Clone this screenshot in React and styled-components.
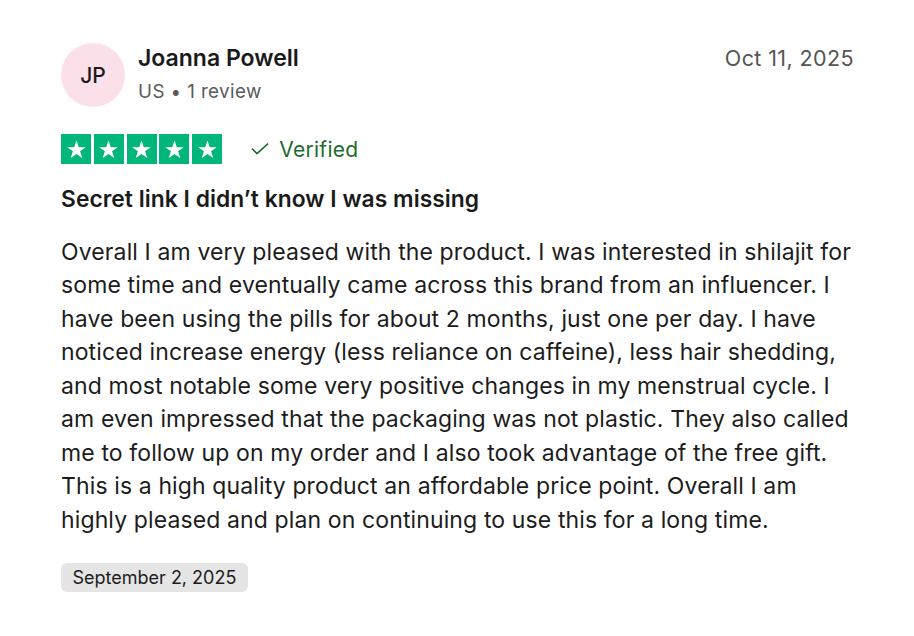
import React from "react";
import styled, { createGlobalStyle } from "styled-components";

const GlobalStyle = createGlobalStyle`
  html, body { margin: 0; padding: 0; background: #ffffff; }
  body { font-family: Inter, "Liberation Sans", sans-serif; color: #1a1a1a; }
  * { box-sizing: border-box; }
`;

const Card = styled.article`
  width: 914px;
  min-height: 636px;
  padding: 43px 60px 0 61px;
  display: flex;
  flex-direction: column;
`;

const Header = styled.header`
  display: flex;
  align-items: flex-start;
`;

const Avatar = styled.div`
  width: 64px;
  height: 64px;
  border-radius: 50%;
  background: #fce0e9;
  display: flex;
  align-items: center;
  justify-content: center;
  font-size: 21px;
  font-weight: 500;
  color: #1a1a1a;
  flex-shrink: 0;
`;

const Who = styled.div`
  margin-left: 13px;
  display: flex;
  flex-direction: column;
  flex: 1;
`;

const Name = styled.div`
  font-size: 23px;
  font-weight: 600;
  line-height: 30px;
  color: #1a1a1a;
`;

const Meta = styled.div`
  margin-top: 6px;
  font-size: 18.8px;
  line-height: 26px;
  color: #5b5b5b;
  letter-spacing: 0.4px;
`;

const DateTop = styled.time`
  font-size: 21.5px;
  line-height: 30px;
  letter-spacing: 0.4px;
  color: #555555;
`;

const RatingRow = styled.div`
  margin-top: 27px;
  display: flex;
  align-items: center;
`;

const Stars = styled.div`
  display: flex;
  gap: 2.8px;
`;

const StarBox = styled.span`
  width: 30px;
  height: 30px;
  background: #00b67a;
  display: flex;
  align-items: center;
  justify-content: center;
`;

const Verified = styled.div`
  margin-left: 29px;
  display: flex;
  align-items: center;
  gap: 10px;
  font-size: 21px;
  letter-spacing: 0.3px;
  color: #1c6b30;
`;

const Title = styled.h2`
  margin: 19.5px 0 0;
  font-size: 22.8px;
  font-weight: 600;
  line-height: 30px;
  letter-spacing: 0.05px;
  color: #1a1a1a;
`;

const Body = styled.p`
  margin: 22.4px 0 0;
  font-size: 23px;
  line-height: 33.5px;
  letter-spacing: 0.12px;
  color: #1c1c1c;
`;

const Pill = styled.div`
  align-self: flex-start;
  margin-top: 25.6px;
  height: 29px;
  padding: 0 11.5px;
  border-radius: 6px;
  background: #e5e5e5;
  font-size: 18px;
  line-height: 29px;
  color: #1c1c1c;
`;

const Star = () => (
  <svg width="21" height="21" viewBox="0 0 24 24" aria-hidden="true">
    <path
      fill="#ffffff"
      d="M12 1.8l2.6 7.6h8l-6.5 4.7 2.5 7.7L12 17l-6.6 4.8 2.5-7.7L1.4 9.4h8z"
    />
  </svg>
);

const Check = () => (
  <svg width="18" height="12" viewBox="0 0 18 12" aria-hidden="true">
    <path d="M1 5.6l5 5 11-10" fill="none" stroke="#1c6b30" strokeWidth="1.5" />
  </svg>
);

const text =
  "Overall I am very pleased with the product. I was interested in shilajit for some time and eventually came across this brand from an influencer. I have been using the pills for about 2 months, just one per day. I have noticed increase energy (less reliance on caffeine), less hair shedding, and most notable some very positive changes in my menstrual cycle. I am even impressed that the packaging was not plastic. They also called me to follow up on my order and I also took advantage of the free gift. This is a high quality product an affordable price point. Overall I am highly pleased and plan on continuing to use this for a long time.";

export default function App() {
  return (
    <>
      <GlobalStyle />
      <Card>
        <Header>
          <Avatar>JP</Avatar>
          <Who>
            <Name>Joanna Powell</Name>
            <Meta>US • 1 review</Meta>
          </Who>
          <DateTop>Oct 11, 2025</DateTop>
        </Header>
        <RatingRow>
          <Stars>
            {[0, 1, 2, 3, 4].map((i) => (
              <StarBox key={i}>
                <Star />
              </StarBox>
            ))}
          </Stars>
          <Verified>
            <Check />
            Verified
          </Verified>
        </RatingRow>
        <Title>Secret link I didn’t know I was missing</Title>
        <Body>{text}</Body>
        <Pill>September 2, 2025</Pill>
      </Card>
    </>
  );
}
